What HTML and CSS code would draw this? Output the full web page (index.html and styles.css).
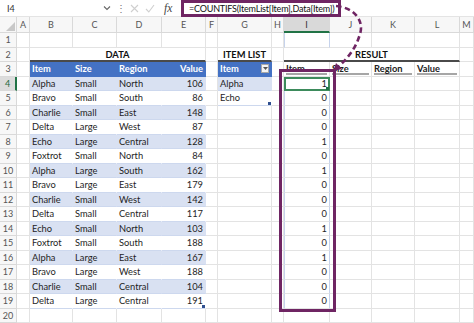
FILE: index.html
```html
<!DOCTYPE html>
<html>
<head>
<meta charset="utf-8">
<link rel="stylesheet" href="styles.css">
</head>
<body>
<div class="fbar">
  <div class="namebox">I4</div>
  <svg class="chev" width="8" height="6" viewBox="0 0 8 6"><polyline points="1,1.5 4,4.5 7,1.5" fill="none" stroke="#666" stroke-width="1.1"/></svg>
  <span class="dots">⋮</span>
  <svg class="ico" width="9" height="9" viewBox="0 0 9 9"><path d="M1 1 L8 8 M8 1 L1 8" stroke="#cfcfcf" stroke-width="1.1"/></svg>
  <svg class="ico" width="10" height="9" viewBox="0 0 10 9"><polyline points="1,5 3.8,8 9,1" fill="none" stroke="#cfcfcf" stroke-width="1.1"/></svg>
  <span class="fx">fx</span>
  <div class="formula">=COUNTIFS(ItemList[Item],Data[Item])</div>
</div>

<div class="sheet">
  <div class="row colhead">
    <div class="corner"><svg width="9" height="9" viewBox="0 0 9 9"><polygon points="9,0 9,9 0,9" fill="#c8c8c8"/></svg></div>
    <div>A</div><div>B</div><div>C</div><div>D</div><div>E</div><div>F</div><div>G</div><div>H</div><div class="csel">I</div><div>J</div><div>K</div><div>L</div><div>M</div>
  </div>
  <div class="row"><div class="rh">1</div><div></div><div></div><div></div><div></div><div></div><div></div><div></div><div></div><div class="ri"></div><div></div><div></div><div></div><div></div></div>
  <div class="row"><div class="rh">2</div><div></div><div class="title s4">DATA</div><div></div><div class="title">ITEM LIST</div><div></div><div class="title s4">RESULT</div><div></div></div>
  <div class="row"><div class="rh">3</div><div></div><div class="hd">Item</div><div class="hd">Size</div><div class="hd">Region</div><div class="hd n">Value</div><div></div><div class="hd filtcell">Item<span class="filt"><svg width="5" height="3" viewBox="0 0 5 3"><polygon points="0,0 5,0 2.5,3" fill="#555"/></svg></span></div><div></div><div class="rhd">Item</div><div class="rhd">Size</div><div class="rhd">Region</div><div class="rhd">Value</div><div></div></div>
  <div class="row"><div class="rh rsel">4</div><div></div><div class="t bd">Alpha</div><div class="t bd">Small</div><div class="t bd">North</div><div class="t bd n">106</div><div></div><div class="t bd">Alpha</div><div></div><div class="ri n cur">1</div><div></div><div></div><div></div><div></div></div>
  <div class="row"><div class="rh">5</div><div></div><div class="t">Bravo</div><div class="t">Small</div><div class="t">South</div><div class="t n">86</div><div></div><div class="t end">Echo</div><div></div><div class="ri n">0</div><div></div><div></div><div></div><div></div></div>
  <div class="row"><div class="rh">6</div><div></div><div class="t bd">Charlie</div><div class="t bd">Small</div><div class="t bd">East</div><div class="t bd n">148</div><div></div><div></div><div></div><div class="ri n">0</div><div></div><div></div><div></div><div></div></div>
  <div class="row"><div class="rh">7</div><div></div><div class="t">Delta</div><div class="t">Large</div><div class="t">West</div><div class="t n">87</div><div></div><div></div><div></div><div class="ri n">0</div><div></div><div></div><div></div><div></div></div>
  <div class="row"><div class="rh">8</div><div></div><div class="t bd">Echo</div><div class="t bd">Large</div><div class="t bd">Central</div><div class="t bd n">128</div><div></div><div></div><div></div><div class="ri n">1</div><div></div><div></div><div></div><div></div></div>
  <div class="row"><div class="rh">9</div><div></div><div class="t">Foxtrot</div><div class="t">Small</div><div class="t">North</div><div class="t n">84</div><div></div><div></div><div></div><div class="ri n">0</div><div></div><div></div><div></div><div></div></div>
  <div class="row"><div class="rh">10</div><div></div><div class="t bd">Alpha</div><div class="t bd">Large</div><div class="t bd">South</div><div class="t bd n">162</div><div></div><div></div><div></div><div class="ri n">1</div><div></div><div></div><div></div><div></div></div>
  <div class="row"><div class="rh">11</div><div></div><div class="t">Bravo</div><div class="t">Large</div><div class="t">East</div><div class="t n">179</div><div></div><div></div><div></div><div class="ri n">0</div><div></div><div></div><div></div><div></div></div>
  <div class="row"><div class="rh">12</div><div></div><div class="t bd">Charlie</div><div class="t bd">Small</div><div class="t bd">West</div><div class="t bd n">142</div><div></div><div></div><div></div><div class="ri n">0</div><div></div><div></div><div></div><div></div></div>
  <div class="row"><div class="rh">13</div><div></div><div class="t">Delta</div><div class="t">Small</div><div class="t">Central</div><div class="t n">117</div><div></div><div></div><div></div><div class="ri n">0</div><div></div><div></div><div></div><div></div></div>
  <div class="row"><div class="rh">14</div><div></div><div class="t bd">Echo</div><div class="t bd">Small</div><div class="t bd">North</div><div class="t bd n">103</div><div></div><div></div><div></div><div class="ri n">1</div><div></div><div></div><div></div><div></div></div>
  <div class="row"><div class="rh">15</div><div></div><div class="t">Foxtrot</div><div class="t">Small</div><div class="t">South</div><div class="t n">188</div><div></div><div></div><div></div><div class="ri n">0</div><div></div><div></div><div></div><div></div></div>
  <div class="row"><div class="rh">16</div><div></div><div class="t bd">Alpha</div><div class="t bd">Large</div><div class="t bd">East</div><div class="t bd n">167</div><div></div><div></div><div></div><div class="ri n">1</div><div></div><div></div><div></div><div></div></div>
  <div class="row"><div class="rh">17</div><div></div><div class="t">Bravo</div><div class="t">Large</div><div class="t">West</div><div class="t n">188</div><div></div><div></div><div></div><div class="ri n">0</div><div></div><div></div><div></div><div></div></div>
  <div class="row"><div class="rh">18</div><div></div><div class="t bd">Charlie</div><div class="t bd">Small</div><div class="t bd">Central</div><div class="t bd n">104</div><div></div><div></div><div></div><div class="ri n">0</div><div></div><div></div><div></div><div></div></div>
  <div class="row"><div class="rh">19</div><div></div><div class="t">Delta</div><div class="t">Large</div><div class="t">Central</div><div class="t n end">191</div><div></div><div></div><div></div><div class="ri n">0</div><div></div><div></div><div></div><div></div></div>
  <div class="row"><div class="rh">20</div><div></div><div></div><div></div><div></div><div></div><div></div><div></div><div></div><div></div><div></div><div></div><div></div><div></div></div>
</div>

<div class="colbox"></div>
<svg class="arrow" width="474" height="323" viewBox="0 0 474 323">
  <path d="M336 6 C356 8 364 22 360 34 C356 48 348 58 338.5 66.5" fill="none" stroke="#6f2563" stroke-width="2.6" stroke-dasharray="5.5 3.5"/>
  <polygon points="333.5,71 336,63 342,69" fill="#6f2563"/>
</svg>
</body>
</html>
```

FILE: styles.css
```css
* { box-sizing: border-box; margin: 0; padding: 0; }
html, body { width: 474px; height: 323px; overflow: hidden; background: #fff; }
body {
  position: relative;
  font-family: Lato, "Open Sans", sans-serif;
  font-size: 9.3px;
  color: #1e1e1e;
}

/* formula bar */
.fbar {
  display: flex;
  align-items: center;
  height: 17px;
  border-bottom: 1px solid #e4e4e4;
  background: #fff;
}
.namebox { width: 103px; padding-left: 7px; font-size: 9px; color: #333; }
.chev { margin-right: 5px; }
.dots { width: 8px; color: #777; font-size: 10px; line-height: 10px; }
.ico { margin-left: 6px; }
.fx {
  margin-left: 9px;
  width: 17px;
  font-family: "Liberation Serif", serif;
  font-style: italic;
  font-size: 11.5px;
  color: #444;
}
.formula {
  align-self: flex-start;
  width: 160px;
  height: 17px;
  border: 3px solid #6f2563;
  padding-left: 5px;
  font-size: 9px;
  letter-spacing: -0.2px;
  line-height: 11px;
  color: #111;
  white-space: nowrap;
  overflow: hidden;
}

/* grid */
.row {
  display: grid;
  grid-template-columns: 17px 13px 43px 44px 45px 44px 12px 54px 12px 46px 42px 43px 45px 14px;
  height: 14.5px;
}
.row > div {
  border-right: 1px solid #e3e3e3;
  border-bottom: 1px solid #e3e3e3;
  line-height: 13.5px;
  padding: 0 2px;
  white-space: nowrap;
  overflow: hidden;
}
.colhead { height: 16px; }
.colhead > div {
  background: #f7f7f7;
  border-color: #d9d9d9;
  text-align: center;
  color: #555;
  font-size: 9px;
  line-height: 15px;
}
.colhead > .corner { position: relative; padding: 0; }
.corner svg { display: block; margin: 5px 0 0 6px; }
.colhead > .csel { background: #d9d9d9; border-bottom: 2px solid #217346; color: #333; }

.rh {
  background: #f7f7f7;
  text-align: center;
  color: #555;
  font-size: 9px;
  border-color: #d9d9d9 !important;
}
.rh.rsel { background: #dcdcdc; color: #1f6b40; border-right: 2px solid #217346 !important; }

.s4 { grid-column: span 4; }
.title {
  text-align: center;
  font-weight: 700;
  color: #111;
  border-bottom: 2px solid #4a4a4a !important;
}
.hd {
  background: #4472c4;
  color: #fff;
  font-weight: 700;
  border-color: #4472c4 !important;
}
.filtcell { display: flex; justify-content: space-between; align-items: center; padding-right: 2px !important; }
.filt {
  display: flex;
  align-items: center;
  justify-content: center;
  width: 8px;
  height: 9px;
  background: #f4f4f4;
  border: 1px solid #a8a8a8;
}
.rhd {
  font-weight: 700;
  color: #222;
  background: linear-gradient(#a6a6a6, #a6a6a6) 2px calc(100% - 1px) / calc(100% - 4px) 2px no-repeat;
}

.t { border-right-color: transparent !important; border-bottom-color: #cdd8ee !important; }
.bd { background: #d9e1f2; }
.n { text-align: right; }
.end { position: relative; }
.end::after {
  content: "";
  position: absolute;
  right: 0;
  bottom: 0;
  width: 3px;
  height: 3px;
  background: #2f4f8f;
}

.ri { border-left: 1px solid #c6d3ec; border-right: 1px solid #c6d3ec !important; }
.cur { position: relative; outline: 2px solid #3d8b5c; outline-offset: -2px; }
.cur::after {
  content: "";
  position: absolute;
  right: -1px;
  bottom: -1px;
  width: 4px;
  height: 4px;
  background: #217346;
}

/* overlays */
.colbox {
  position: absolute;
  left: 279px;
  top: 69px;
  width: 57px;
  height: 243px;
  border: 3px solid #6f2563;
}
.arrow { position: absolute; left: 0; top: 0; pointer-events: none; }
```
